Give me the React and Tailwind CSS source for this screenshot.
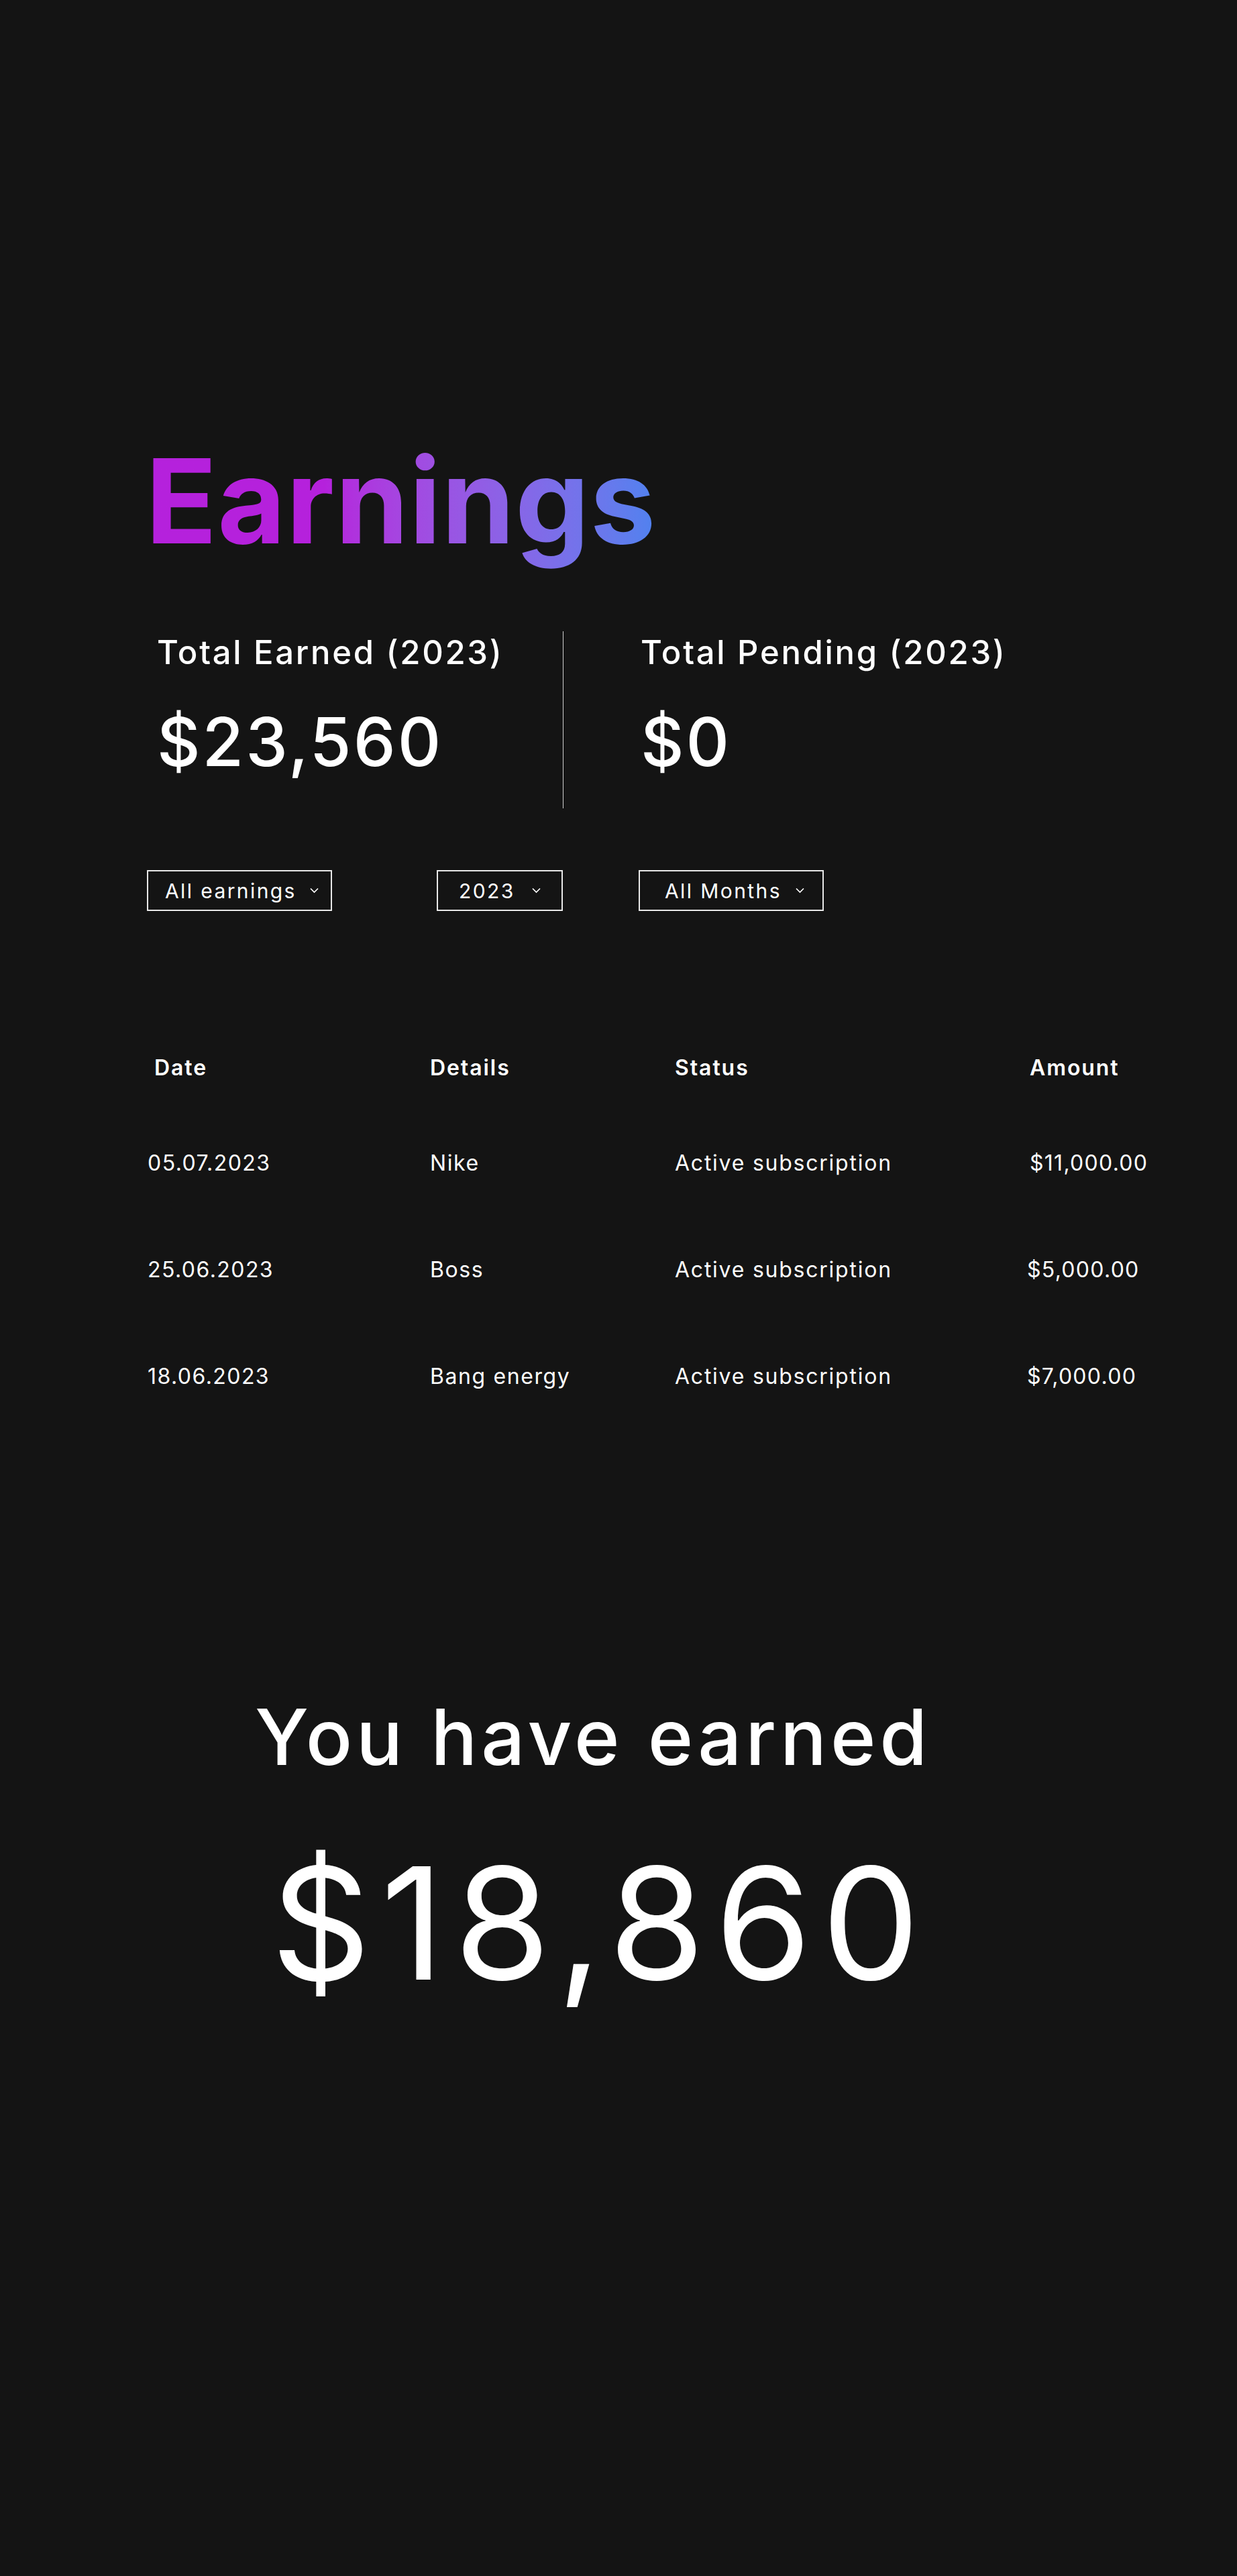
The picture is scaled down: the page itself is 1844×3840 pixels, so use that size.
import { useState } from "react";

const font = "font-['Inter',sans-serif]";

const rows = [
    { date: "05.07.2023", details: "Nike", status: "Active subscription", amount: "$11,000.00", amountCls: "pl-[4px]" },
    { date: "25.06.2023", details: "Boss", status: "Active subscription", amount: "$5,000.00", amountCls: "" },
    { date: "18.06.2023", details: "Bang energy", status: "Active subscription", amount: "$7,000.00", amountCls: "" },
];

function Chevron() {
    return (
        <svg width="13" height="9" viewBox="0 0 13 9" fill="none" className="shrink-0">
            <polyline points="1,1.5 6.5,7 12,1.5" stroke="white" strokeWidth="1.7" />
        </svg>
    );
}

function Dropdown({ label, boxCls, gapCls }) {
    const [open, setOpen] = useState(false);
    return (
        <button
            onClick={() => setOpen(!open)}
            className={`h-[61px] border-2 border-[#e8e8e8] flex items-center text-white text-[30px] leading-none tracking-[0.08em] ${boxCls}`}
        >
            <span>{label}</span>
            <span className={gapCls}>
                <Chevron />
            </span>
        </button>
    );
}

export default function App() {
    return (
        <div className={`min-h-[3840px] bg-[#141414] text-white ${font}`}>
            <div className="pl-[219px] pt-[659px]">
                <h1 className="inline-block pb-[40px] text-[175px] leading-none font-bold tracking-[0.005em] bg-linear-to-r from-[#b521dc] from-35% to-[#4f82ef] bg-clip-text text-transparent -ml-[2px]">
                    Earnings
                </h1>

                <div className="flex mt-[67px] ml-[15px]">
                    <div className="w-[605px] pt-[7px] pb-[49px]">
                        <div className="text-[49px] leading-none font-medium tracking-[0.055em]">
                            Total Earned (2023)
                        </div>
                        <div className="mt-[59px] text-[100px] leading-none font-medium tracking-[0.03em]">
                            $23,560
                        </div>
                    </div>
                    <div className="w-px bg-[#cfcfcf]" />
                    <div className="pl-[115px] pt-[7px]">
                        <div className="text-[49px] leading-none font-medium tracking-[0.055em]">
                            Total Pending (2023)
                        </div>
                        <div className="mt-[59px] text-[100px] leading-none font-medium tracking-[0.03em]">
                            $0
                        </div>
                    </div>
                </div>

                <div className="flex mt-[92px]">
                    <Dropdown label="All earnings" boxCls="w-[276px] pl-[25px]" gapCls="ml-[20px]" />
                    <div className="ml-[156px]">
                        <Dropdown label="2023" boxCls="w-[188px] pl-[31px]" gapCls="ml-[25px]" />
                    </div>
                    <div className="ml-[113px]">
                        <Dropdown label="All Months" boxCls="w-[276px] pl-[37px]" gapCls="ml-[21px]" />
                    </div>
                </div>

                <div className="mt-[218px] grid grid-cols-[422px_365px_525px_auto] text-[32px] leading-none">
                    <div className="font-semibold tracking-[0.06em] pl-[11px]">Date</div>
                    <div className="font-semibold tracking-[0.06em]">Details</div>
                    <div className="font-semibold tracking-[0.06em]">Status</div>
                    <div className="font-semibold tracking-[0.06em] pl-[4px]">Amount</div>
                    {rows.map((r, i) => (
                        <div key={r.date} className="contents">
                            <div className={`tracking-[0.045em] pl-[1px] ${i === 0 ? "mt-[110px]" : "mt-[127px]"}`}>{r.date}</div>
                            <div className={`tracking-[0.05em] ${i === 0 ? "mt-[110px]" : "mt-[127px]"}`}>{r.details}</div>
                            <div className={`tracking-[0.055em] ${i === 0 ? "mt-[110px]" : "mt-[127px]"}`}>{r.status}</div>
                            <div className={`tracking-[0.04em] ${r.amountCls} ${i === 0 ? "mt-[110px]" : "mt-[127px]"}`}>{r.amount}</div>
                        </div>
                    ))}
                </div>
            </div>

            <div className="pl-[219px] pr-[295px] text-center">
                <div className="mt-[464px] text-[115px] leading-none font-medium tracking-[0.05em]">
                    You have earned
                </div>
                <div className="mt-[104px] pl-[22px] text-[232px] leading-none font-normal tracking-[0.065em]">
                    $18,860
                </div>
            </div>
        </div>
    );
}
